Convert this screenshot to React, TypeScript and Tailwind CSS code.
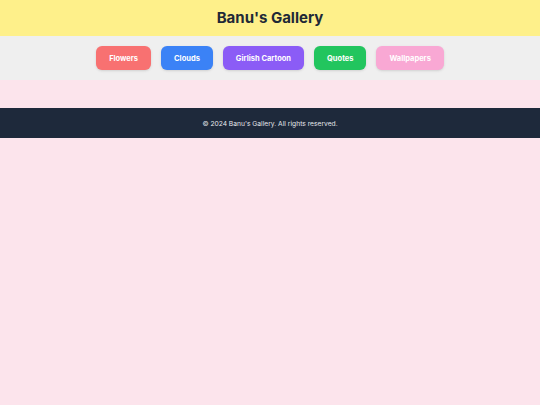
export default function App() {
  const links = [
    { label: 'Flowers', cls: 'bg-[#f87171]' },
    { label: 'Clouds', cls: 'bg-[#3b82f6]' },
    { label: 'Girlish Cartoon', cls: 'bg-[#8b5cf6]' },
    { label: 'Quotes', cls: 'bg-[#22c55e]' },
    { label: 'Wallpapers', cls: 'bg-[#f9a8d4]' },
  ]

  return (
    <div className="min-h-[405px] bg-[#fce4ec] font-['Inter',sans-serif]">
      {/* Header */}
      <header className="flex h-9 items-center justify-center bg-[#fef08a]">
        <h1 className="text-[15px] font-bold text-[#1f2937]">Banu's Gallery</h1>
      </header>

      {/* Nav */}
      <nav className="flex h-11 items-center justify-center gap-[10px] bg-[#efefef]">
        {links.map((l) => (
          <a
            key={l.label}
            href="#"
            className={`flex h-6 items-center rounded-md px-[13px] pt-px text-[7.5px] font-bold text-white shadow-sm ${l.cls}`}
          >
            {l.label}
          </a>
        ))}
      </nav>

      <main className="h-7" />

      {/* Footer */}
      <footer className="flex h-[30px] items-center justify-center bg-[#1e293b] pt-[3px]">
        <p className="text-[6.7px] text-[#e5e7eb]">© 2024 Banu's Gallery. All rights reserved.</p>
      </footer>
    </div>
  )
}
